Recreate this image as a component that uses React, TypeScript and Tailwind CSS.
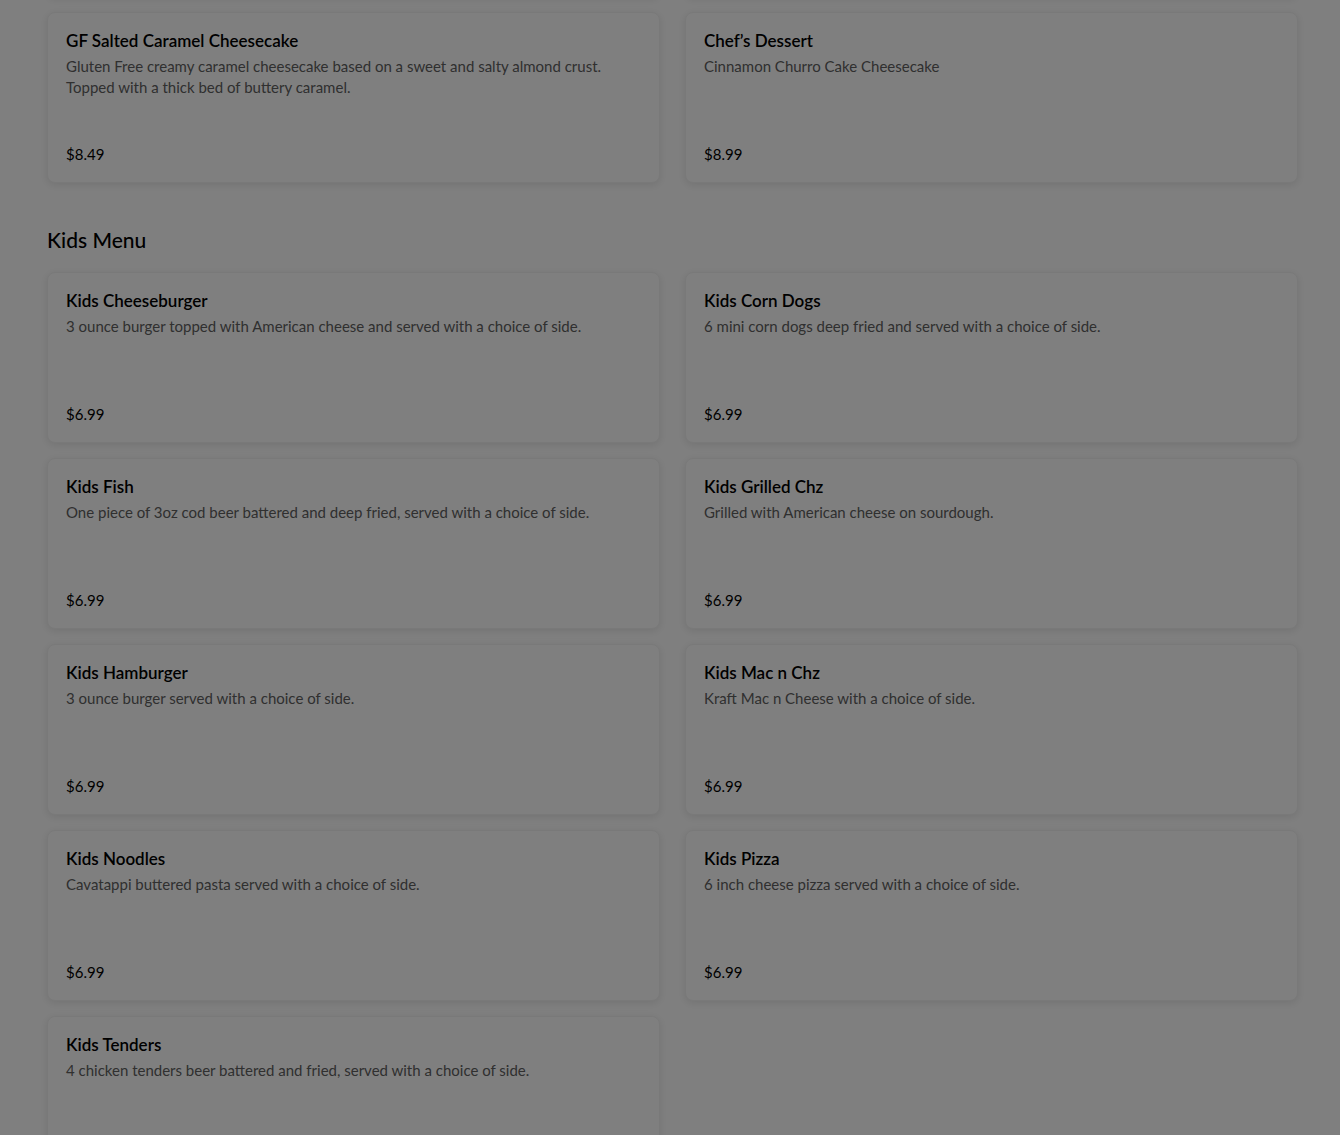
import React from "react";

type Item = { name: string; desc: string; price: string };

const dessertRow: Item[] = [
  {
    name: "GF Salted Caramel Cheesecake",
    desc: "Gluten Free creamy caramel cheesecake based on a sweet and salty almond crust. Topped with a thick bed of buttery caramel.",
    price: "$8.49",
  },
  { name: "Chef\u2019s Dessert", desc: "Cinnamon Churro Cake Cheesecake", price: "$8.99" },
];

const kids: Item[] = [
  { name: "Kids Cheeseburger", desc: "3 ounce burger topped with American cheese and served with a choice of side.", price: "$6.99" },
  { name: "Kids Corn Dogs", desc: "6 mini corn dogs deep fried and served with a choice of side.", price: "$6.99" },
  { name: "Kids Fish", desc: "One piece of 3oz cod beer battered and deep fried, served with a choice of side.", price: "$6.99" },
  { name: "Kids Grilled Chz", desc: "Grilled with American cheese on sourdough.", price: "$6.99" },
  { name: "Kids Hamburger", desc: "3 ounce burger served with a choice of side.", price: "$6.99" },
  { name: "Kids Mac n Chz", desc: "Kraft Mac n Cheese with a choice of side.", price: "$6.99" },
  { name: "Kids Noodles", desc: "Cavatappi buttered pasta served with a choice of side.", price: "$6.99" },
  { name: "Kids Pizza", desc: "6 inch cheese pizza served with a choice of side.", price: "$6.99" },
  { name: "Kids Tenders", desc: "4 chicken tenders beer battered and fried, served with a choice of side.", price: "$6.99" },
];

const cardBase =
  "h-[171px] rounded-lg border border-[#f3f3f3] bg-white shadow-[0_2px_8px_rgba(0,0,0,0.10)]";

function Card({ item }: { item: Item }) {
  return (
    <div className={`${cardBase} flex flex-col justify-between px-[18px] pb-[18px] pt-[17px]`}>
      <div>
        <div className="text-[17px] font-semibold leading-[22px] text-black">{item.name}</div>
        <div className="mt-[4px] pr-4 text-[15px] leading-[21px] text-[#606060]">{item.desc}</div>
      </div>
      <div className="text-[15px] leading-[20px] text-black">{item.price}</div>
    </div>
  );
}

export default function App() {
  return (
    <div
      className="relative min-h-screen overflow-hidden bg-white"
      style={{ fontFamily: "Lato, 'Noto Sans', sans-serif" }}
    >
      <div className="ml-[47px] w-[1251px] pb-10">
        <div className="mt-[-174px] grid grid-cols-2 gap-x-[25px] gap-y-[15px]">
          <div className={cardBase} />
          <div className={cardBase} />
          {dessertRow.map((it) => (
            <Card key={it.name} item={it} />
          ))}
        </div>
        <h2 className="mt-[43px] text-[21px] font-medium leading-[28px] text-black">Kids Menu</h2>
        <div className="mt-[18px] grid grid-cols-2 gap-x-[25px] gap-y-[15px]">
          {kids.map((it) => (
            <Card key={it.name} item={it} />
          ))}
        </div>
      </div>
      <div className="pointer-events-none fixed inset-0 bg-black/50" />
    </div>
  );
}
